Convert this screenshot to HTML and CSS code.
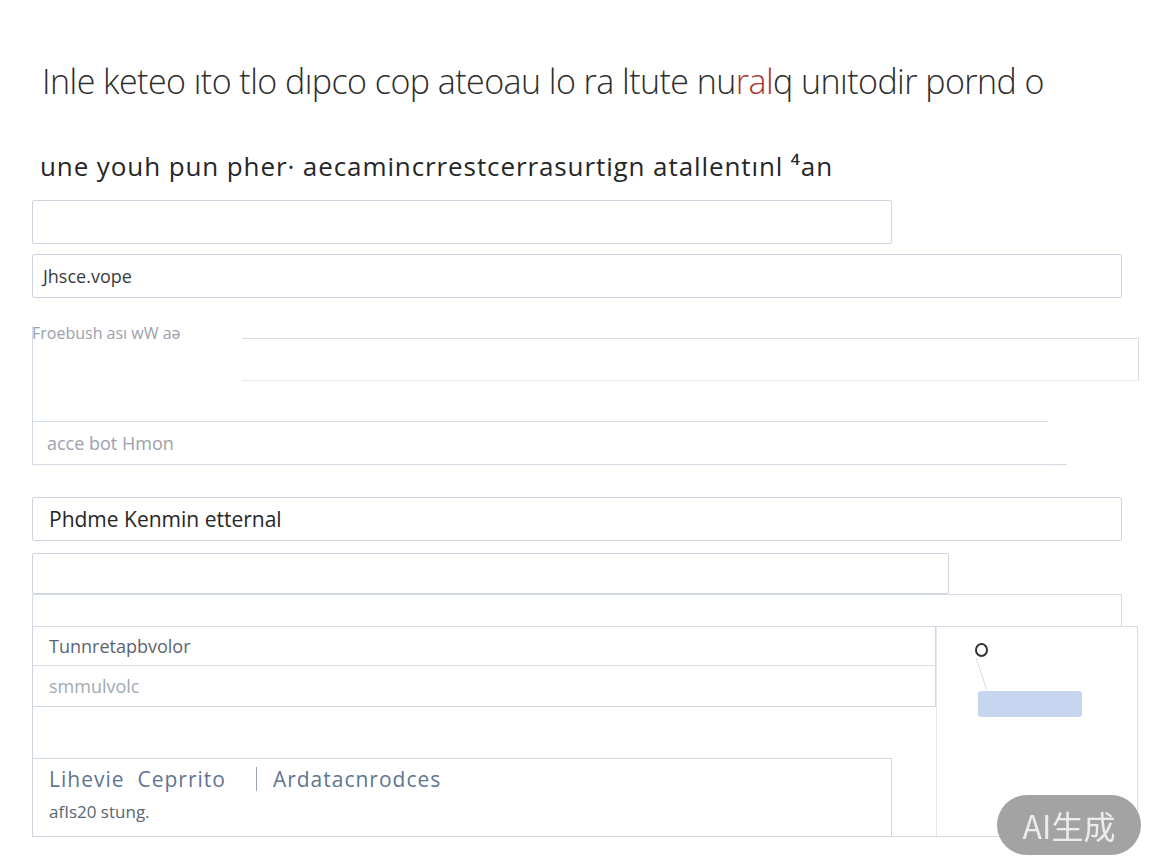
FILE: index.html
```html
<!DOCTYPE html>
<html lang="en">

<head>
    <meta charset="UTF-8">
    <meta name="viewport" content="width=device-width, initial-scale=1.0">
    <title>Formulario</title>
    <link rel="stylesheet" href="styles.css">
</head>

<body>

    <div class="page">

        <h1 class="title">Inle keteo ıto tlo dıpco cop ateoau lo ra ltute nu<span class="mark">ral</span>q unıtodir pornd o</h1>

        <p class="lead">une youh pun pher· aecamincrrestcerrasurtign atallentınl ⁴an</p>

        <div class="field field-short"></div>

        <div class="field field-full">Jhsce.vope</div>

        <!-- grupo con etiqueta -->
        <div class="group">
            <div class="group-head">
                <span class="group-label">Froebush ası wW aə</span>
                <div class="group-box"></div>
            </div>
            <div class="group-gap"></div>
            <div class="group-row">acce bot Hmon</div>
        </div>

        <div class="field field-full field-big">Phdme Kenmin etternal</div>

        <div class="field field-mid"></div>

        <!-- panel inferior -->
        <div class="panel-tab"></div>
        <div class="card">
            <div class="card-main">
                <div class="list">
                    <div class="list-row">Tunnretapbvolor</div>
                    <div class="list-row list-row-muted">smmulvolc</div>
                </div>
                <div class="info">
                    <div class="info-top">
                        <span>Lihevie&nbsp; Ceprrito</span>
                        <span class="info-sep"></span>
                        <span>Ardatacnrodces</span>
                    </div>
                    <div class="info-bottom">afIs20 stung.</div>
                </div>
            </div>
            <div class="card-side">
                <span class="dot"></span>
                <span class="link-line"></span>
                <button class="side-button"></button>
            </div>
        </div>

    </div>

    <div class="badge">AI生成</div>

</body>

</html>
```

FILE: styles.css
```css
body {
    font-family: "Open Sans", Arial, sans-serif;
    margin: 0;
    padding: 0;
    background-color: white;
    color: #2b2b2b;
}

.page {
    padding: 60px 0 0 32px;
    width: 1106px;
}

.title {
    margin: 0 0 0 10px;
    font-size: 34px;
    font-weight: 300;
    letter-spacing: -0.55px;
    line-height: 42px;
    color: #2d2d2d;
    white-space: nowrap;
}

.mark {
    color: #a8362e;
}

.lead {
    margin: 48px 0 0 8px;
    font-size: 26px;
    line-height: 32px;
    letter-spacing: 0.9px;
    color: #262626;
    white-space: nowrap;
}

/* Campos */
.field {
    box-sizing: border-box;
    height: 44px;
    border: 1px solid #cdd4df;
    border-radius: 2px;
    padding: 0 10px;
    display: flex;
    align-items: center;
    font-size: 18px;
    color: #3a3a3a;
}

.field-short {
    width: 860px;
    margin-top: 18px;
}

.field-full {
    width: 1090px;
    margin-top: 10px;
}

.field-big {
    margin-top: 32px;
    padding-left: 16px;
    font-size: 21px;
    color: #262626;
}

.field-mid {
    width: 917px;
    height: 41px;
    margin-top: 12px;
}

/* Grupo */
.group {
    margin-top: 28px;
    width: 1106px;
    border-left: 1px solid #d4dae3;
}

.group-head {
    display: flex;
    align-items: flex-start;
}

.group-label {
    width: 210px;
    font-size: 16px;
    line-height: 18px;
    color: #9aa1ab;
    margin-top: -2px;
    margin-left: -1px;
}

.group-box {
    flex-grow: 1;
    height: 41px;
    margin-top: 12px;
    border-top: 1px solid #d6dce5;
    border-right: 1px solid #d6dce5;
    border-bottom: 1px solid #e6eaf0;
}

.group-gap {
    height: 40px;
    width: 1015px;
    border-bottom: 1px solid #d6dce5;
}

.group-row {
    width: 1020px;
    height: 42px;
    padding-left: 14px;
    display: flex;
    align-items: center;
    font-size: 18px;
    color: #9ba2ac;
    border-bottom: 1px solid #d4dae3;
}

/* Panel */
.panel-tab {
    margin-top: 0;
    width: 1090px;
    height: 32px;
    box-sizing: border-box;
    border: 1px solid #d4dae3;
    border-bottom: none;
}

.card {
    box-sizing: border-box;
    width: 1106px;
    height: 211px;
    border: 1px solid #d8dde5;
    border-left-color: #cdd4df;
    display: flex;
}

.card-main {
    width: 903px;
}

.list {
    border-right: 1px solid #d0d7e1;
    border-bottom: 1px solid #d0d7e1;
}

.list-row {
    height: 38px;
    padding-left: 16px;
    display: flex;
    align-items: center;
    font-size: 18px;
    color: #5b6470;
    border-bottom: 1px solid #d8dde5;
}

.list-row-muted {
    color: #a3a9b2;
    height: 40px;
    border-bottom: none;
}

.info {
    margin-top: 51px;
    width: 859px;
    height: 79px;
    box-sizing: border-box;
    border: 1px solid #d0d7e1;
    border-left: none;
    padding: 8px 0 0 16px;
}

.info-top {
    display: flex;
    align-items: center;
    font-size: 21px;
    letter-spacing: 1px;
    color: #5f7590;
    height: 24px;
}

.info-sep {
    width: 1px;
    height: 24px;
    background-color: #9aa6b5;
    margin: 0 16px 0 30px;
}

.info-bottom {
    margin-top: 9px;
    font-size: 17px;
    color: #5b6470;
}

.card-side {
    flex-grow: 1;
    position: relative;
    border-left: 1px solid #e3e7ee;
}

.dot {
    position: absolute;
    left: 38px;
    top: 16px;
    width: 9px;
    height: 10px;
    border: 2px solid #333;
    border-radius: 50%;
}

.link-line {
    position: absolute;
    left: 44px;
    top: 30px;
    width: 1px;
    height: 34px;
    background-color: #d6dce5;
    transform: rotate(-18deg);
}

.side-button {
    position: absolute;
    left: 41px;
    top: 64px;
    width: 104px;
    height: 26px;
    border: none;
    border-radius: 3px;
    background-color: #c6d6f0;
}

/* Marca */
.badge {
    position: fixed;
    left: 997px;
    top: 795px;
    width: 144px;
    height: 60px;
    border-radius: 30px;
    background-color: #a3a3a3;
    color: #ececec;
    font-family: "Noto Sans CJK SC", "Noto Sans", sans-serif;
    font-size: 32px;
    display: flex;
    align-items: center;
    justify-content: center;
}
```
